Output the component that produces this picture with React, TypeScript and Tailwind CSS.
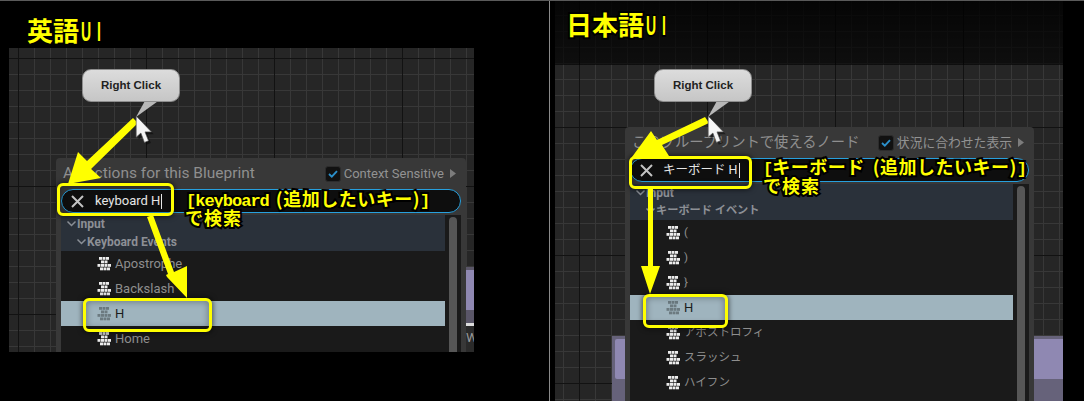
import React from "react";

const BRICKS: [number, number][] = [
  [2, 0], [5.5, 0], [9, 0], [4, 3.5], [7.5, 3.5], [0.5, 7], [4, 7], [7.5, 7], [11, 7], [3, 10.5], [6.5, 10.5], [10, 10.5],
];

function KeyIcon({ dim = false }: { dim?: boolean }) {
  return (
    <svg width="15" height="14" viewBox="0 0 15 14" className="shrink-0">
      {BRICKS.map(([x, y]) => (
        <rect key={`${x}-${y}`} x={x} y={y} width="3" height="2.8" fill={dim ? "#6c7a80" : "#ececec"} />
      ))}
    </svg>
  );
}

function Row({ label, selected = false, jp = false }: { label: string; selected?: boolean; jp?: boolean }) {
  return (
    <div
      className={`flex h-[25px] items-center gap-[3px] pl-[36px] ${jp ? "text-[11.5px]" : "text-[13px]"} ${
        selected ? "bg-[#9fb4be] text-[#1c1c1c]" : "bg-[#1a1a1a] text-[#8e8e8e]"
      }`}
    >
      <KeyIcon dim={selected} />
      <span className={selected ? "text-[13px]" : ""}>{label}</span>
    </div>
  );
}

function Chevron() {
  return (
    <svg width="11" height="8" viewBox="0 0 11 8" className="shrink-0">
      <path d="M1.5 1.5 5.5 5.5 9.5 1.5" fill="none" stroke="#8a8f96" strokeWidth="1.5" />
    </svg>
  );
}

function Menu({
  title,
  toggle,
  query,
  group,
  rows,
  selected,
  jp = false,
}: {
  title: string;
  toggle: string;
  query: string;
  group: string;
  rows: string[];
  selected: string;
  jp?: boolean;
}) {
  return (
    <div
      className={`flex flex-col rounded-t-[4px] bg-[#383838] px-[5px] font-['Roboto','Noto_Sans_CJK_JP',sans-serif] ${
        jp ? "w-[409px]" : "w-[410px]"
      }`}
    >
      <div className="flex h-[31px] items-center justify-between pl-[2px] pr-[5px] text-[#8f8f8f]">
        <span className={`whitespace-nowrap ${jp ? "text-[14.3px]" : "text-[15.5px]"}`}>{title}</span>
        <div className="flex shrink-0 items-center gap-[3px]">
          <span className="flex h-[16px] w-[16px] shrink-0 items-center justify-center rounded-[3px] border border-[#2c2c2c] bg-[#111]">
            <svg width="10" height="8" viewBox="0 0 10 8">
              <path d="M1 4 3.8 6.6 9 1.2" fill="none" stroke="#2b8fca" strokeWidth="1.9" />
            </svg>
          </span>
          <span className={`whitespace-nowrap text-[#929292] ${jp ? "text-[12.8px]" : "text-[13px]"}`}>{toggle}</span>
          <svg width="6" height="9" viewBox="0 0 6 9" className="ml-[3px] shrink-0">
            <path d="M0 0 6 4.5 0 9Z" fill="#7c7c7c" />
          </svg>
        </div>
      </div>
      <div className="flex h-[24px] items-center rounded-[12px] border border-[#27a0de] bg-[#0e0e0e] pl-[8px]">
        <svg width="15" height="15" viewBox="0 0 15 15" className="shrink-0">
          <path d="M2 2 13 13M13 2 2 13" stroke="#c4c4c4" strokeWidth="2" />
        </svg>
        <span className={`flex items-center text-[#e6e6e6] ${jp ? "ml-[9px] text-[12.5px]" : "ml-[10px] text-[13px]"}`}>
          {query}
          <span className="ml-[1px] h-[15px] w-px bg-[#e6e6e6]" />
        </span>
      </div>
      <div className="mt-[2px] flex bg-[#1a1a1a]">
        <div className="min-w-0 flex-1 overflow-hidden">
          <div className="h-[36px] bg-[#2a313a] font-bold text-[#8d9096]">
            <div className="flex h-[18px] items-center pl-[5px] text-[12px]">
              <Chevron />
              <span>Input</span>
            </div>
            <div className={`flex h-[18px] items-center pl-[15px] ${jp ? "text-[11.2px]" : "text-[12px]"}`}>
              <Chevron />
              <span>{group}</span>
            </div>
          </div>
          {rows.map((r) => (
            <Row key={r} label={r} selected={r === selected} jp={jp} />
          ))}
        </div>
        <div className="w-[16px] shrink-0 px-[4px] pt-[2px]">
          <div className="h-[400px] w-[8px] rounded-full bg-[#565656]" />
        </div>
      </div>
    </div>
  );
}

function Callout({ className }: { className: string }) {
  return (
    <div className={`absolute h-[49px] w-[98px] ${className}`}>
      <svg width="98" height="49" viewBox="0 0 98 49" className="absolute left-0 top-0">
        <path d="M64 30 54 48 79 30Z" fill="#b8b8b8" />
      </svg>
      <div className="absolute left-0 top-0 flex h-[33px] w-[98px] items-center justify-center rounded-[9px] border border-[#8e8e8e] bg-gradient-to-b from-[#dcdcdc] to-[#c6c6c6] font-['Liberation_Sans',sans-serif] text-[11.5px] font-bold text-[#222]">
        Right Click
      </div>
    </div>
  );
}

function Cursor({ className }: { className: string }) {
  return (
    <svg width="20" height="30" viewBox="0 0 17 25.5" className={`absolute ${className}`}>
      <path d="M3 2V20L7 16.5 10 24.5 13.5 23 10.5 15.5H16Z" fill="#000" fillOpacity="0.45" />
      <path d="M1 0V18L5 14.5 8 22.5 11.5 21 8.5 13.5H14Z" fill="#f4f4f4" stroke="#555" strokeWidth="0.6" />
    </svg>
  );
}

function YellowBox({ className }: { className: string }) {
  return (
    <div
      className={`absolute rounded-[6px] border-[3px] border-[#ffff00] shadow-[0_0_5px_1px_rgba(0,0,0,0.55),inset_0_0_6px_1px_rgba(0,0,0,0.3)] ${className}`}
    />
  );
}

const mark =
  "absolute whitespace-nowrap font-['Noto_Sans_CJK_JP',sans-serif] font-bold text-[#ffff00] [-webkit-text-stroke:4px_#000] [paint-order:stroke_fill]";

function Mono({ children }: { children: React.ReactNode }) {
  return <span className="font-['Liberation_Mono',monospace] text-[17px] tracking-[-1px]">{children}</span>;
}

function NarrowUI() {
  return (
    <span className="ml-[2px] inline-block origin-left scale-x-50 font-['Liberation_Sans',sans-serif] text-[28px] tracking-[12px]">
      UI
    </span>
  );
}

export default function App() {
  return (
    <div className="relative flex h-[401px] w-[1084px] overflow-hidden border-t border-[#5a5a5a] bg-black">
      {/* left capture */}
      <div className="w-[549px] shrink-0 pl-[9px] pt-[47px]">
        <div className="relative h-[304px] w-[465px] overflow-hidden bg-[#262626] bg-[linear-gradient(#121212_1px,transparent_1px),linear-gradient(90deg,#121212_1px,transparent_1px),linear-gradient(#383838_1px,transparent_1px),linear-gradient(90deg,#383838_1px,transparent_1px)] bg-[size:128px_128px,128px_128px,16px_16px,16px_16px] bg-[position:9px_10px] pl-[47px] pt-[110px]">
          <div className="absolute left-[457px] top-[219px] h-[56px] w-[8px] bg-[#5a5668]" />
          <div className="absolute left-[457px] top-[222px] h-[40px] w-[8px] bg-[#8f88b2]" />
          <div className="absolute left-[457px] top-[275px] h-[29px] w-[8px] border-t-[3px] border-[#dcdcdc] bg-[#2a2a2a] font-['Roboto',sans-serif] text-[13px] leading-[24px] text-[#999]">
            W
          </div>
          <Menu
            title="All Actions for this Blueprint"
            toggle="Context Sensitive"
            query="keyboard H"
            group="Keyboard Events"
            rows={["Apostrophe", "Backslash", "H", "Home"]}
            selected="H"
          />
        </div>
      </div>
      {/* divider */}
      <div className="w-px shrink-0 bg-[#8a8a8a]" />
      {/* right capture */}
      <div className="shrink-0 pl-[5px]">
        <div className="relative h-[400px] w-[508px] overflow-hidden bg-[#262626] bg-[linear-gradient(#121212_1px,transparent_1px),linear-gradient(90deg,#121212_1px,transparent_1px),linear-gradient(#383838_1px,transparent_1px),linear-gradient(90deg,#383838_1px,transparent_1px)] bg-[size:128px_128px,128px_128px,16px_16px,16px_16px] bg-[position:24px_126px] pl-[70px] pt-[126px]">
          <div className="absolute left-0 top-0 h-[64px] w-full bg-gradient-to-b from-[#000000dd] to-[#000000a0]" />
          <div className="absolute left-[57px] top-[335px] h-[65px] w-[22px] bg-[#66627a]" />
          <div className="absolute left-[60px] top-[338px] h-[40px] w-[19px] rounded-l-[2px] bg-[#8f88b2]" />
          <div className="absolute left-[470px] top-[335px] h-[65px] w-[38px] bg-[#66627a]" />
          <div className="absolute left-[470px] top-[338px] h-[40px] w-[38px] bg-[#8f88b2]" />
          <div className="relative">
            <Menu
              title="このブループリントで使えるノード"
              toggle="状況に合わせた表示"
              query="キーボード H"
              group="キーボード イベント"
              rows={["(", ")", "}", "H", "アポストロフィ", "スラッシュ", "ハイフン", "ホーム"]}
              selected="H"
              jp
            />
          </div>
        </div>
      </div>

      {/* annotations */}
      <Callout className="left-[82px] top-[68px]" />
      <Callout className="left-[654px] top-[68px]" />
      <YellowBox className="left-[57px] top-[182px] h-[33px] w-[117px]" />
      <YellowBox className="left-[83px] top-[297px] h-[34px] w-[129px]" />
      <YellowBox className="left-[629px] top-[155px] h-[33px] w-[123px]" />
      <YellowBox className="left-[643px] top-[293px] h-[34px] w-[85px]" />
      <svg width="1084" height="401" viewBox="0 0 1084 401" className="absolute -top-px left-0">
        <g fill="#ffff00">
          <path d="M133 118 138 123 91 169 101 178 68 184 78 152 87 161Z" />
          <path d="M147 217 153 215 174 272 187 266 187 298 167 277 166 275 168 274Z" />
          <path d="M705 117 709 123 662 145 669 156 632 157 651 131 657 140Z" />
          <path d="M648 189H653V266H660L650 294 641 266H648Z" />
        </g>
      </svg>
      <Cursor className="left-[135px] top-[115px]" />
      <Cursor className="left-[707px] top-[115px]" />

      <div className={`${mark} left-[27px] top-[10px] text-[26px] leading-[38px]`}>
        英語
        <NarrowUI />
      </div>
      <div className={`${mark} left-[566px] top-[4px] text-[26px] leading-[38px]`}>
        日本語
        <NarrowUI />
      </div>
      <div className={`${mark} left-[186px] top-[185px] text-[18px] leading-[24px] tracking-[0.5px]`}>
        <Mono>[keyboard</Mono>
        <span className="ml-[7px]">(追加したいキー)</span>
        <Mono>]</Mono>
      </div>
      <div className={`${mark} left-[185px] top-[204px] text-[18px] leading-[24px] tracking-[1px]`}>で検索</div>
      <div className={`${mark} left-[763px] top-[153px] text-[18px] leading-[24px] tracking-[0.5px]`}>
        <Mono>[</Mono>キーボード
        <span className="ml-[8px]">(追加したいキー)</span>
        <Mono>]</Mono>
      </div>
      <div className={`${mark} left-[763px] top-[172px] text-[18px] leading-[24px] tracking-[1px]`}>で検索</div>
    </div>
  );
}
